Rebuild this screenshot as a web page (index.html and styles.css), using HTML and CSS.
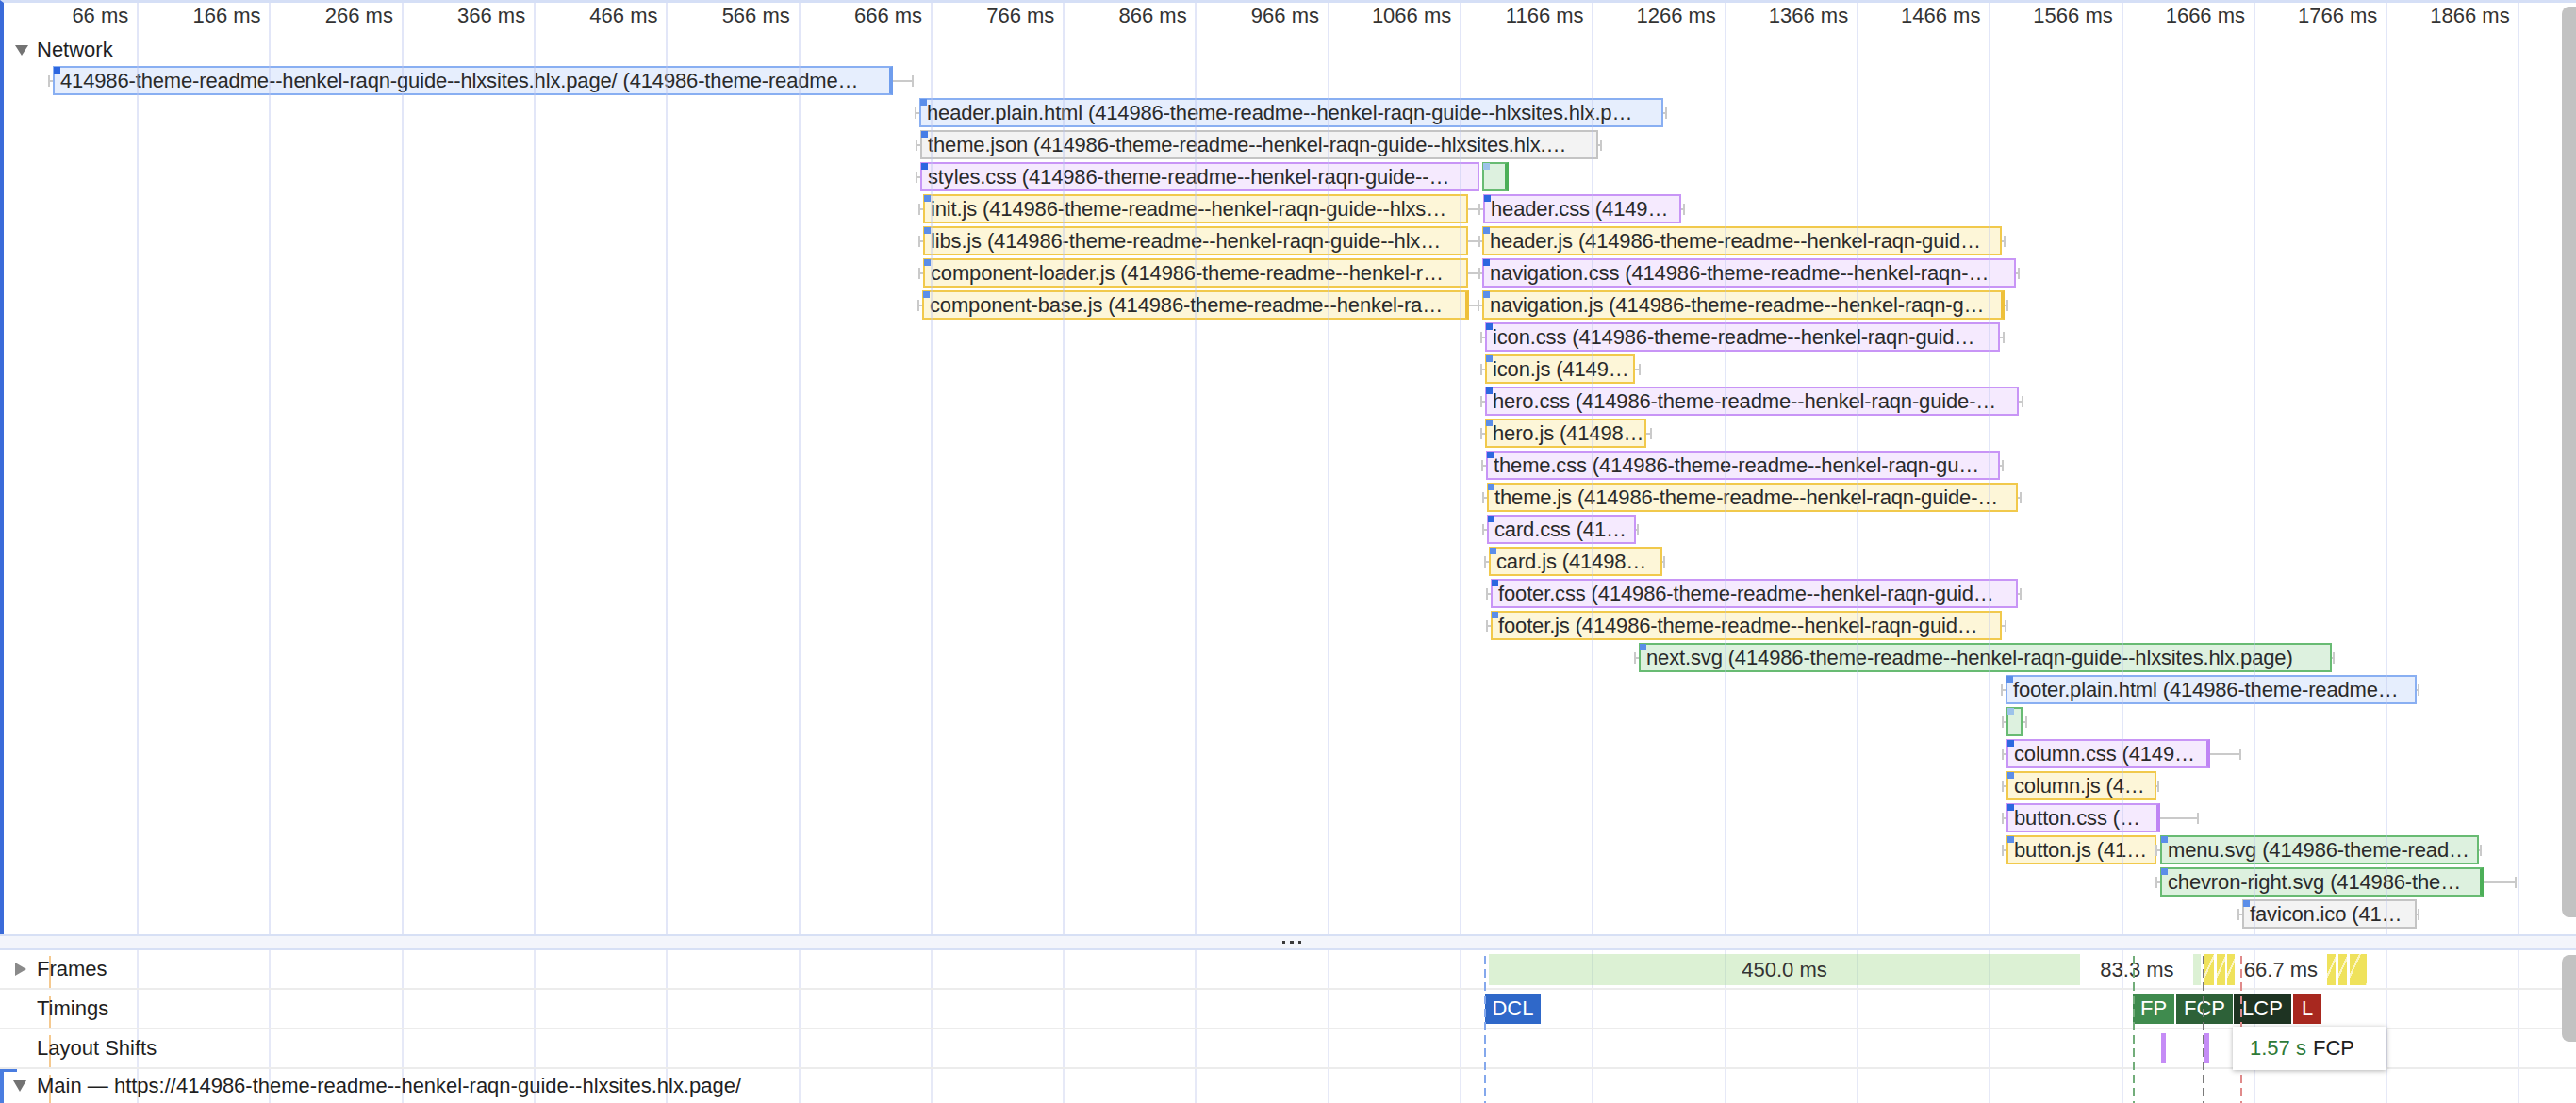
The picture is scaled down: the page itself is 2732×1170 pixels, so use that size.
FILE: index.html
```html
<!DOCTYPE html>
<html>
<head>
<meta charset="utf-8">
<title>Performance</title>
<link rel="stylesheet" href="styles.css">
</head>
<body>
<div class="flame">
  <div class="ruler">
    <span class="tl">66 ms</span><span class="tl">166 ms</span><span class="tl">266 ms</span><span class="tl">366 ms</span><span class="tl">466 ms</span><span class="tl">566 ms</span><span class="tl">666 ms</span><span class="tl">766 ms</span><span class="tl">866 ms</span><span class="tl">966 ms</span><span class="tl">1066 ms</span><span class="tl">1166 ms</span><span class="tl">1266 ms</span><span class="tl">1366 ms</span><span class="tl">1466 ms</span><span class="tl">1566 ms</span><span class="tl">1666 ms</span><span class="tl">1766 ms</span><span class="tl">1866 ms</span>
  </div>
  <div class="group-head"><span class="tri-down"></span><span>Network</span></div>
  <div class="rows">
    <div class="row"><div class="bar doc fin hi" style="left:56px;width:891px"><i class="wl"></i><span class="t">414986-theme-readme--henkel-raqn-guide--hlxsites.hlx.page/ (414986-theme-readme…</span><i class="wr" style="width:20px"></i></div></div>
    <div class="row"><div class="bar doc" style="left:975px;width:789px"><i class="wl"></i><span class="t">header.plain.html (414986-theme-readme--henkel-raqn-guide--hlxsites.hlx.p…</span><i class="wr" style="width:2px"></i></div></div>
    <div class="row"><div class="bar json mid" style="left:976px;width:719px"><i class="wl"></i><span class="t">theme.json (414986-theme-readme--henkel-raqn-guide--hlxsites.hlx.…</span><i class="wr" style="width:2px"></i></div></div>
    <div class="row"><div class="bar css hi" style="left:976px;width:593px"><i class="wl"></i><span class="t">styles.css (414986-theme-readme--henkel-raqn-guide--…</span></div><div class="bar img fin lo" style="left:1572px;width:28px"><span class="t"></span></div></div>
    <div class="row"><div class="bar js" style="left:979px;width:578px"><i class="wl"></i><span class="t">init.js (414986-theme-readme--henkel-raqn-guide--hlxs…</span><i class="wr" style="width:11px"></i></div><div class="bar css hi" style="left:1573px;width:210px"><i class="wl"></i><span class="t">header.css (4149…</span><i class="wr" style="width:2px"></i></div></div>
    <div class="row"><div class="bar js" style="left:979px;width:578px"><i class="wl"></i><span class="t">libs.js (414986-theme-readme--henkel-raqn-guide--hlx…</span><i class="wr" style="width:11px"></i></div><div class="bar js" style="left:1572px;width:551px"><i class="wl"></i><span class="t">header.js (414986-theme-readme--henkel-raqn-guid…</span><i class="wr" style="width:2px"></i></div></div>
    <div class="row"><div class="bar js" style="left:979px;width:578px"><i class="wl"></i><span class="t">component-loader.js (414986-theme-readme--henkel-r…</span><i class="wr" style="width:11px"></i></div><div class="bar css hi" style="left:1572px;width:566px"><i class="wl"></i><span class="t">navigation.css (414986-theme-readme--henkel-raqn-…</span><i class="wr" style="width:2px"></i></div></div>
    <div class="row"><div class="bar js fin" style="left:978px;width:580px"><i class="wl"></i><span class="t">component-base.js (414986-theme-readme--henkel-ra…</span><i class="wr" style="width:9px"></i></div><div class="bar js fin" style="left:1572px;width:554px"><i class="wl"></i><span class="t">navigation.js (414986-theme-readme--henkel-raqn-g…</span><i class="wr" style="width:2px"></i></div></div>
    <div class="row"><div class="bar css hi" style="left:1575px;width:546px"><i class="wl"></i><span class="t">icon.css (414986-theme-readme--henkel-raqn-guid…</span><i class="wr" style="width:3px"></i></div></div>
    <div class="row"><div class="bar js" style="left:1575px;width:159px"><i class="wl"></i><span class="t">icon.js (4149…</span><i class="wr" style="width:4px"></i></div></div>
    <div class="row"><div class="bar css hi" style="left:1575px;width:566px"><i class="wl"></i><span class="t">hero.css (414986-theme-readme--henkel-raqn-guide-…</span><i class="wr" style="width:3px"></i></div></div>
    <div class="row"><div class="bar js" style="left:1575px;width:171px"><i class="wl"></i><span class="t">hero.js (41498…</span><i class="wr" style="width:4px"></i></div></div>
    <div class="row"><div class="bar css hi" style="left:1576px;width:545px"><i class="wl"></i><span class="t">theme.css (414986-theme-readme--henkel-raqn-gu…</span><i class="wr" style="width:2px"></i></div></div>
    <div class="row"><div class="bar js" style="left:1577px;width:563px"><i class="wl"></i><span class="t">theme.js (414986-theme-readme--henkel-raqn-guide-…</span><i class="wr" style="width:2px"></i></div></div>
    <div class="row"><div class="bar css hi" style="left:1577px;width:158px"><i class="wl"></i><span class="t">card.css (41…</span><i class="wr" style="width:1px"></i></div></div>
    <div class="row"><div class="bar js" style="left:1579px;width:184px"><i class="wl"></i><span class="t">card.js (41498…</span><i class="wr" style="width:1px"></i></div></div>
    <div class="row"><div class="bar css hi" style="left:1581px;width:559px"><i class="wl"></i><span class="t">footer.css (414986-theme-readme--henkel-raqn-guid…</span><i class="wr" style="width:2px"></i></div></div>
    <div class="row"><div class="bar js" style="left:1581px;width:542px"><i class="wl"></i><span class="t">footer.js (414986-theme-readme--henkel-raqn-guid…</span><i class="wr" style="width:3px"></i></div></div>
    <div class="row"><div class="bar img" style="left:1738px;width:735px"><i class="wl"></i><span class="t">next.svg (414986-theme-readme--henkel-raqn-guide--hlxsites.hlx.page)</span><i class="wr" style="width:1px"></i></div></div>
    <div class="row"><div class="bar doc" style="left:2127px;width:436px"><i class="wl"></i><span class="t">footer.plain.html (414986-theme-readme…</span><i class="wr" style="width:1px"></i></div></div>
    <div class="row"><div class="bar img lo" style="left:2128px;width:17px"><i class="wl"></i><span class="t"></span><i class="wr" style="width:3px"></i></div></div>
    <div class="row"><div class="bar css fin hi" style="left:2128px;width:216px"><i class="wl"></i><span class="t">column.css (4149…</span><i class="wr" style="width:31px"></i></div></div>
    <div class="row"><div class="bar js" style="left:2128px;width:159px"><i class="wl"></i><span class="t">column.js (4…</span><i class="wr" style="width:1px"></i></div></div>
    <div class="row"><div class="bar css fin hi" style="left:2128px;width:163px"><i class="wl"></i><span class="t">button.css (…</span><i class="wr" style="width:39px"></i></div></div>
    <div class="row"><div class="bar js" style="left:2128px;width:159px"><i class="wl"></i><span class="t">button.js (41…</span></div><div class="bar img" style="left:2291px;width:338px"><i class="wl"></i><span class="t">menu.svg (414986-theme-read…</span><i class="wr" style="width:1px"></i></div></div>
    <div class="row"><div class="bar img fin" style="left:2291px;width:343px"><i class="wl"></i><span class="t">chevron-right.svg (414986-the…</span><i class="wr" style="width:33px"></i></div></div>
    <div class="row"><div class="bar json" style="left:2378px;width:185px"><i class="wl"></i><span class="t">favicon.ico (41…</span><i class="wr" style="width:1px"></i></div></div>
  </div>
  <div class="grid-over"></div>
  <div class="thumb thumb-top"></div>
</div>

<div class="splitter"><i class="dot"></i><i class="dot"></i><i class="dot"></i></div>

<div class="tracks">
  <div class="track frames">
    <span class="tri-right"></span><span class="label">Frames</span>
    <div class="frame green" style="left:1579px;width:627px">450.0 ms</div>
    <div class="frame" style="left:2207px;width:119px">83.3 ms</div>
    <div class="frame green" style="left:2326px;width:8px"></div>
    <div class="frame partial" style="left:2338px;width:10px"></div>
    <div class="frame partial" style="left:2351px;width:9px"></div>
    <div class="frame partial" style="left:2362px;width:8px"></div>
    <div class="frame" style="left:2370px;width:98px">66.7 ms</div>
    <div class="frame partial" style="left:2468px;width:9px"></div>
    <div class="frame partial" style="left:2480px;width:9px"></div>
    <div class="frame partial" style="left:2492px;width:18px"></div>
  </div>
  <div class="track timings">
    <span class="label">Timings</span>
    <div class="mark dcl" style="left:1575px;width:59px">DCL</div>
    <div class="mark fp" style="left:2262px;width:44px">FP</div>
    <div class="mark fcp" style="left:2308px;width:60px">FCP</div>
    <div class="mark lcp" style="left:2369px;width:61px">LCP</div>
    <div class="mark ld" style="left:2432px;width:30px">L</div>
  </div>
  <div class="track shifts">
    <span class="label">Layout Shifts</span>
    <div class="shift" style="left:2292px"></div>
    <div class="shift" style="left:2338px"></div>
  </div>
  <div class="track main">
    <span class="tri-down small"></span><span class="label">Main — https://414986-theme-readme--henkel-raqn-guide--hlxsites.hlx.page/</span>
  </div>

  <div class="vline v-dcl" style="left:1574px"></div>
  <div class="vline v-fp" style="left:2262px"></div>
  <div class="vline v-fcp" style="left:2336px"></div>
  <div class="vline v-lcp" style="left:2376px"></div>

  <div class="tooltip"><span class="tt-time">1.57 s</span><span class="tt-name">FCP</span></div>
  <div class="thumb thumb-bottom"></div>
</div>
</body>
</html>
```

FILE: styles.css
```css
html, body {
  margin: 0;
  padding: 0;
}

body {
  width: 2732px;
  height: 1170px;
  overflow: hidden;
  background: #ffffff;
  font-family: "Liberation Sans", Arial, sans-serif;
  font-size: 22px;
  color: #202020;
}

/* ---------- upper flame chart (network) ---------- */
.flame {
  position: relative;
  height: 991px;
  box-sizing: border-box;
  border-top: 3px solid #d5dff6;
  border-left: 4px solid #3a6bd9;
  overflow: hidden;
}

.ruler {
  display: flex;
  height: 35px;
  line-height: 28px;
  padding-left: 2px;
  color: #333333;
  white-space: nowrap;
}

.tl {
  flex: 0 0 140.3px;
  box-sizing: border-box;
  text-align: right;
  padding-right: 10px;
}

.group-head {
  display: flex;
  align-items: center;
  height: 30px;
  padding-left: 12px;
  color: #1f1f1f;
}

.tri-down {
  width: 0;
  height: 0;
  border-left: 7px solid transparent;
  border-right: 7px solid transparent;
  border-top: 11px solid #737373;
  margin-right: 9px;
}

.tri-down.small {
  border-top-width: 12px;
  margin-right: 11px;
}

.tri-right {
  width: 0;
  height: 0;
  border-top: 7px solid transparent;
  border-bottom: 7px solid transparent;
  border-left: 12px solid #8a8a8a;
  margin-right: 11px;
}

.rows {
  margin-left: -4px;
}

.row {
  position: relative;
  height: 34px;
}

.bar {
  position: absolute;
  top: 2px;
  height: 31px;
  box-sizing: border-box;
  border: 2px solid #c2c2c2;
}

.bar::before {
  content: "";
  position: absolute;
  top: -1px;
  left: -1px;
  width: 7px;
  height: 7px;
  background: #5b8ee9;
  z-index: 1;
}

.bar.hi::before { background: #2d67e0; }
.bar.mid::before { background: #467de6; }
.bar.lo::before { background: #9cc3ea; }

.t {
  display: block;
  overflow: hidden;
  white-space: nowrap;
  text-overflow: clip;
  line-height: 27px;
  padding-left: 6px;
  letter-spacing: -0.15px;
  color: #2a2a2a;
}

.doc  { background: #e6eefd; border-color: #89aff2; }
.json { background: #f3f3f3; border-color: #c4c4c4; }
.css  { background: #f5eafe; border-color: #c895f6; }
.js   { background: #fdf6d8; border-color: #f1c94c; }
.img  { background: #ddf1df; border-color: #68bb73; }

.fin { border-right-width: 4px; }
.doc.fin { border-right-color: #6f9ded; }
.js.fin  { border-right-color: #eec03a; }
.css.fin { border-right-color: #bf84f4; }
.img.fin { border-right-color: #4caf58; }

.wl, .wr {
  position: absolute;
  top: 50%;
  height: 12px;
  margin-top: -6px;
  background: linear-gradient(#cacaca, #cacaca) center / 100% 2px no-repeat;
}

.wl {
  right: calc(100% + 2px);
  width: 3px;
  border-left: 2px solid #cacaca;
}

.wr {
  left: 100%;
  margin-left: 2px;
  border-right: 2px solid #cacaca;
}

.fin .wr { margin-left: 4px; }

.grid-over {
  position: absolute;
  left: 0;
  top: 0;
  right: 0;
  bottom: 0;
  pointer-events: none;
  background-image: repeating-linear-gradient(90deg, rgba(186, 196, 238, 0.42) 0 2px, transparent 2px 140.3px);
  background-position: 141px 0;
  background-size: 2806px 100%;
  background-repeat: no-repeat;
}

.thumb {
  position: absolute;
  right: 0;
  width: 15px;
  border-radius: 8px 0 0 8px;
  background: #c2c2c2;
  z-index: 4;
}

.thumb-top {
  top: 4px;
  height: 966px;
}

.thumb-bottom {
  top: 5px;
  height: 92px;
}

/* ---------- splitter ---------- */
.splitter {
  height: 17px;
  box-sizing: border-box;
  border-top: 2px solid #d7e0f5;
  border-bottom: 2px solid #d7e0f5;
  background: #f3f5fb;
  display: flex;
  justify-content: center;
  align-items: center;
  gap: 5px;
  padding-left: 8px;
}

.dot {
  width: 3.5px;
  height: 3.5px;
  background: #3a3a3a;
}

/* ---------- lower tracks ---------- */
.tracks {
  position: relative;
  height: 162px;
  background-image: repeating-linear-gradient(90deg, #e6e9f7 0 2px, transparent 2px 140.3px);
  background-position: 145px 0;
  background-size: 2806px 100%;
  background-repeat: no-repeat;
  overflow: hidden;
}

.track {
  position: relative;
  height: 40px;
  border-bottom: 2px solid #ececec;
  display: flex;
  align-items: center;
  padding-left: 39px;
  color: #1f1f1f;
  white-space: nowrap;
}

.track::after {
  content: "";
  position: absolute;
  left: 52px;
  top: 6px;
  bottom: 0;
  width: 2px;
  background: #f5c98f;
}

.track.frames { padding-left: 16px; }

.track.main {
  padding-left: 14px;
  height: 36px;
  border-bottom: 0;
}

.track.main::before {
  content: "";
  position: absolute;
  left: 0;
  top: 0;
  width: 18px;
  height: 100%;
  box-sizing: border-box;
  border-top: 3px solid #4a7de0;
  border-left: 4px solid #4a7de0;
}

.label { position: relative; z-index: 1; }

.frame {
  position: absolute;
  top: 4px;
  height: 33px;
  line-height: 33px;
  text-align: center;
  color: #333333;
  overflow: hidden;
}

.frame.green { background: rgba(148, 211, 125, 0.33); }

.frame.partial {
  background: repeating-linear-gradient(115deg, #efe25c 0 9px, #fbf5c2 9px 11px, #efe25c 11px 20px);
}

.mark {
  position: absolute;
  top: 4px;
  height: 32px;
  line-height: 32px;
  text-align: center;
  color: #ffffff;
}

.mark.dcl { background: #2f68c9; }
.mark.fp  { background: #3f8b4e; }
.mark.fcp { background: #2d6138; }
.mark.lcp { background: #1e3322; }
.mark.ld  { background: #a8281f; }

.shift {
  position: absolute;
  top: 4px;
  width: 5px;
  height: 32px;
  background: #c58cf6;
}

.vline {
  position: absolute;
  top: 6px;
  bottom: 0;
  width: 2px;
  z-index: 2;
}

.v-dcl { background: repeating-linear-gradient(to bottom, #84a8ec 0 9px, transparent 9px 14px); }
.v-fp  { background: repeating-linear-gradient(to bottom, #72ad7a 0 9px, transparent 9px 14px); }
.v-fcp { background: repeating-linear-gradient(to bottom, #7a7a7a 0 9px, transparent 9px 14px); }
.v-lcp { background: repeating-linear-gradient(to bottom, #e08a8a 0 9px, transparent 9px 14px); }

.tooltip {
  position: absolute;
  left: 2368px;
  top: 81px;
  width: 163px;
  height: 46px;
  box-sizing: border-box;
  padding-left: 18px;
  display: flex;
  align-items: center;
  background: #ffffff;
  box-shadow: 0 1px 5px rgba(0, 0, 0, 0.3);
  z-index: 3;
  white-space: nowrap;
}

.tt-time { color: #2f7a37; }
.tt-name { margin-left: 7px; color: #202020; }
```
